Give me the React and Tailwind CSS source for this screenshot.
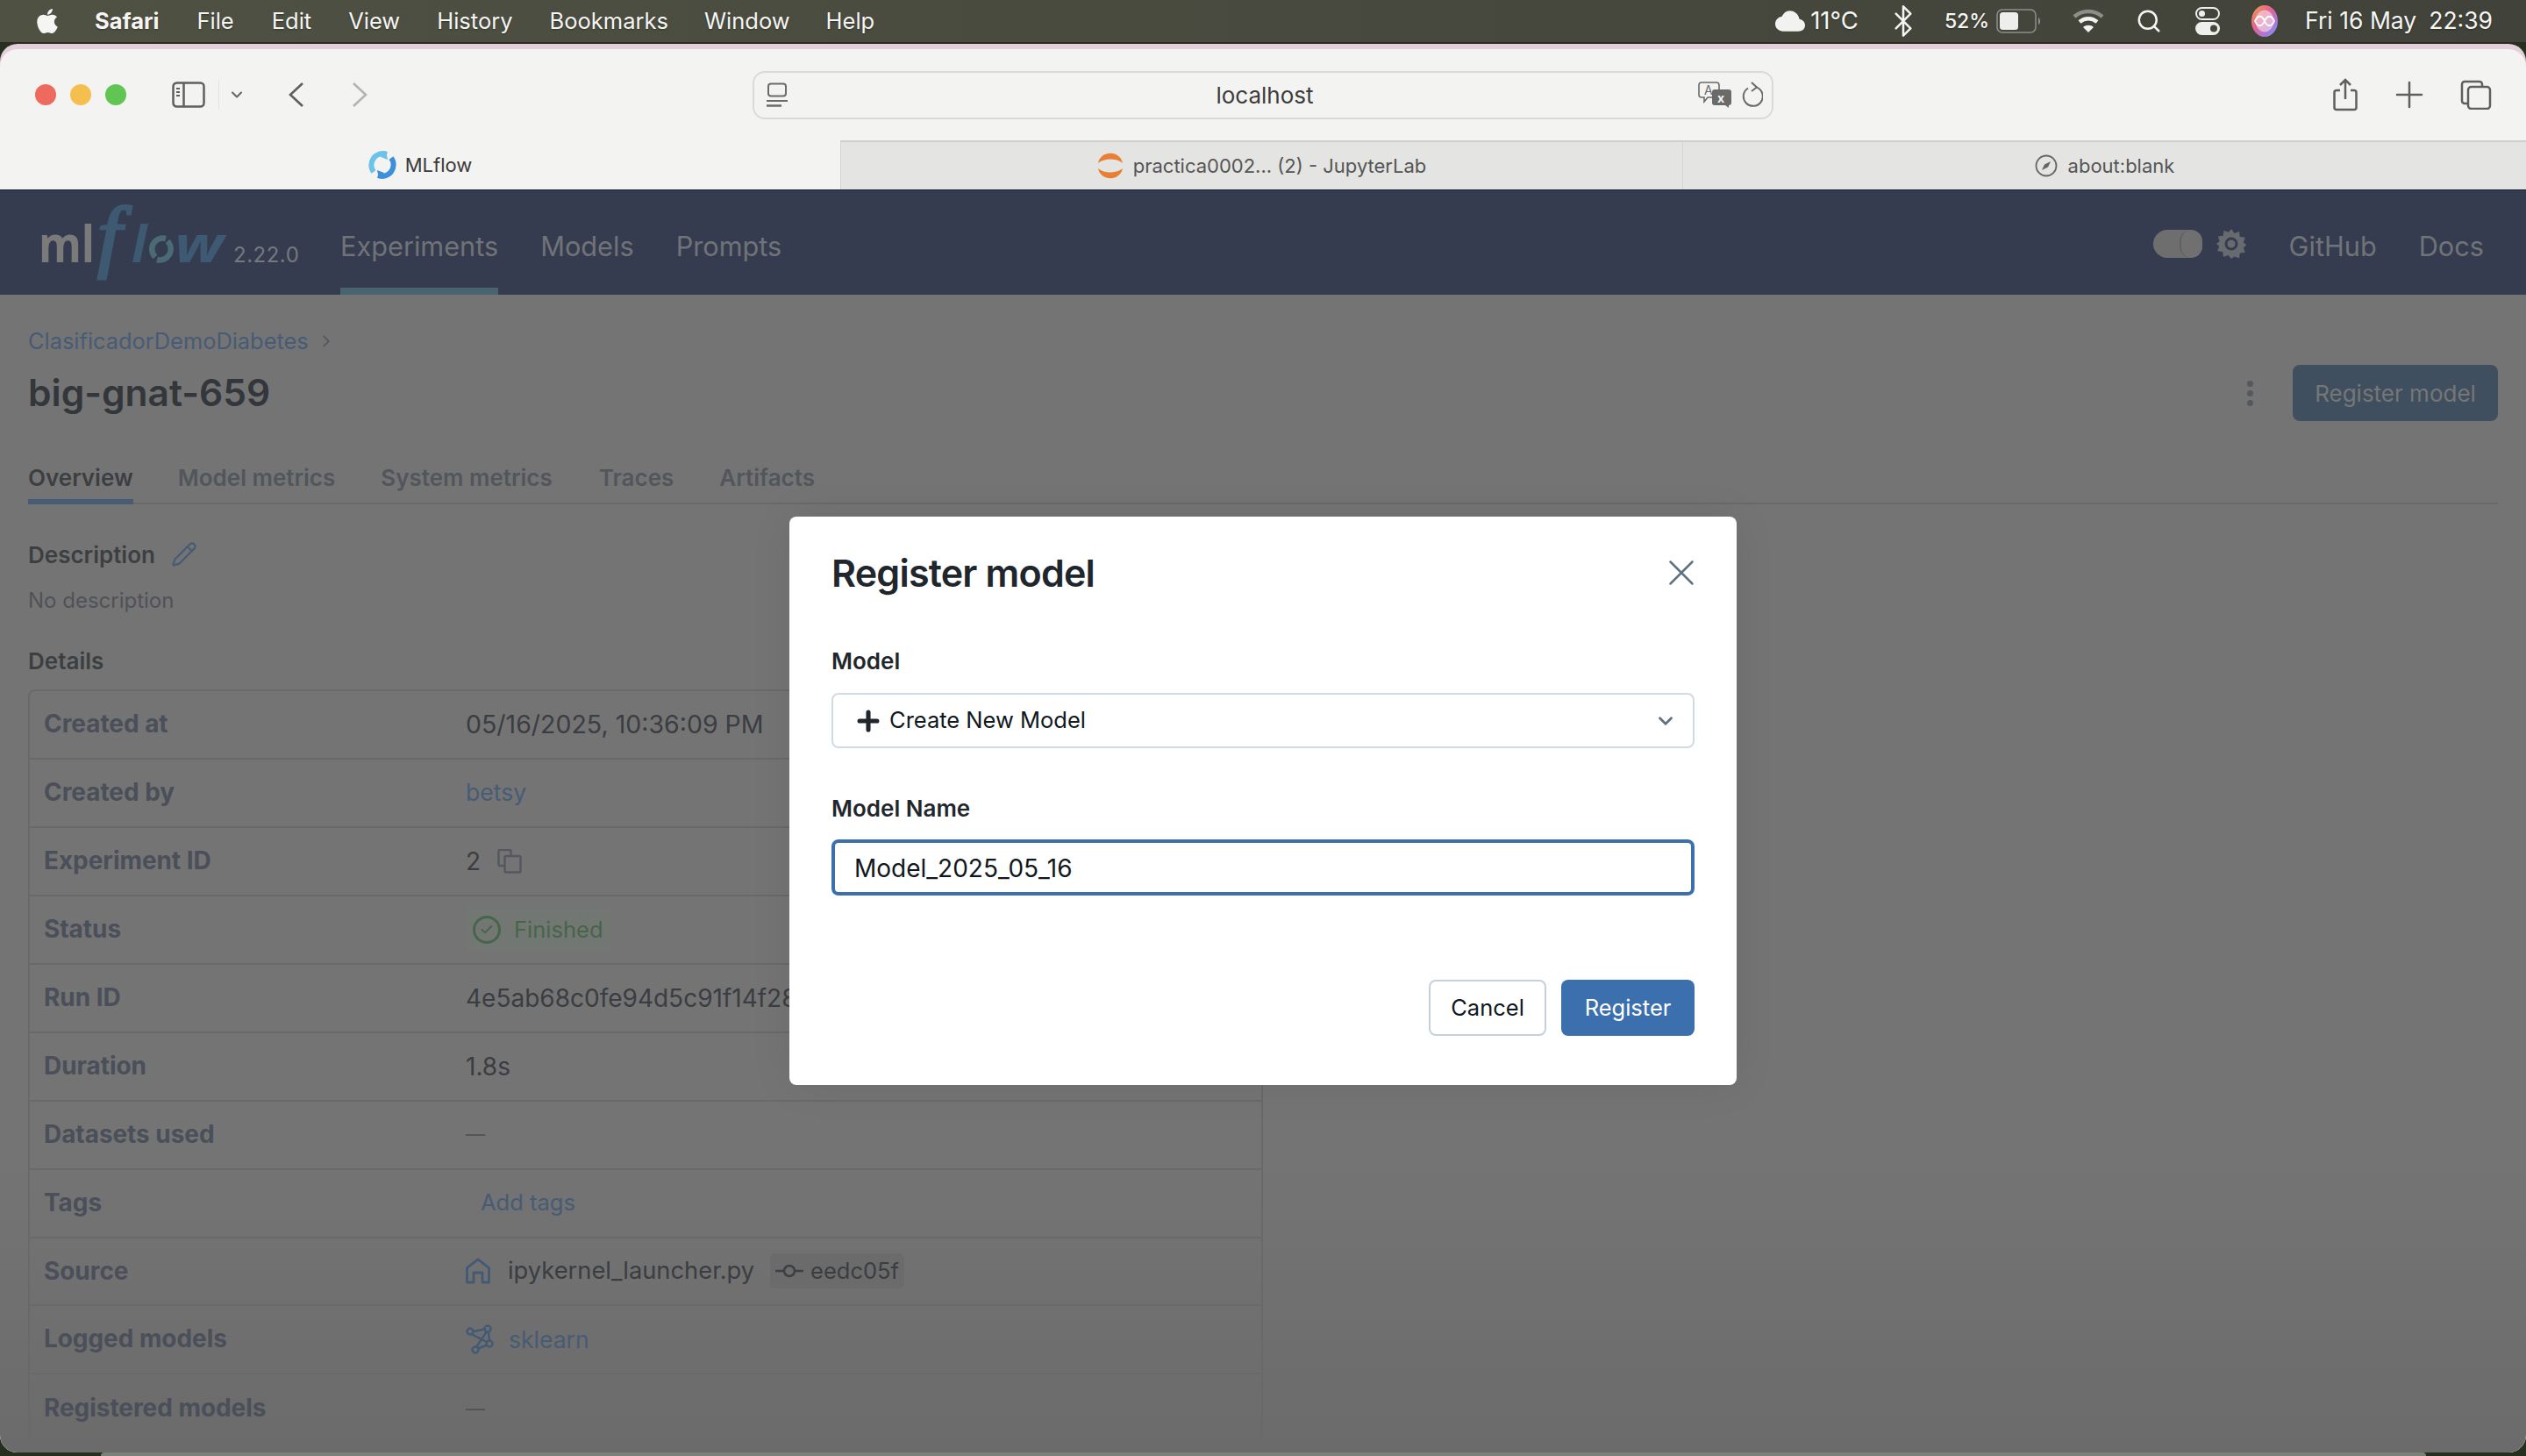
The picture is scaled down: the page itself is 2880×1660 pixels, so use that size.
import React from "react";
import { FaApple } from "react-icons/fa";
import { IoCloud } from "react-icons/io5";
import { Search, Bluetooth, X, ChevronDown, ChevronRight, Plus, Pencil, Check } from "lucide-react";

const SidebarIcon = () => (
  <svg width="38" height="30" viewBox="0 0 38 30" fill="none" stroke="#5f5f5f" strokeWidth="2.5">
    <rect x="1.5" y="1.5" width="35" height="27" rx="4" />
    <path d="M13.5 1.5v27" />
    <path d="M5 8h4M5 12h4M5 16h4" strokeWidth="2" />
  </svg>
);
const PageIcon = () => (
  <svg width="24" height="28" viewBox="0 0 24 28" fill="none" stroke="#6a6a6a" strokeWidth="2">
    <rect x="2" y="1.5" width="20" height="14" rx="3" />
    <path d="M0 21h24" />
    <path d="M0 26.500h17" strokeWidth="2.500" />
  </svg>
);
const TranslateIcon = () => (
  <svg width="38" height="30" viewBox="0 0 38 30">
    <path d="M4 1h17a3 3 0 0 1 3 3v11a3 3 0 0 1-3 3H11l-4 5v-5H4a3 3 0 0 1-3-3V4a3 3 0 0 1 3-3z" fill="#f3f3f1" stroke="#6a6a6a" strokeWidth="1.600" />
    <text x="7" y="15" fontSize="14" fontFamily="Inter, sans-serif" fill="#6a6a6a">A</text>
    <path d="M19 9h16a3 3 0 0 1 3 3v12a3 3 0 0 1-3 3v3l-4-3H19a3 3 0 0 1-3-3V12a3 3 0 0 1 3-3z" fill="#6a6a6a" />
    <text x="22" y="24" fontSize="14" fontWeight="700" fontFamily="Inter, sans-serif" fill="#f3f3f1">x</text>
  </svg>
);
const ReloadIcon = () => (
  <svg width="24" height="30" viewBox="0 0 24 30" fill="none" stroke="#6a6a6a" strokeWidth="2">
    <path d="M7 7.500a11 11 0 1 0 10-.8" />
    <path d="M11 1l6 5.500-6 4.500" />
  </svg>
);
const ShareIcon = () => (
  <svg width="28" height="38" viewBox="0 0 28 38" fill="none" stroke="#5f5f5f" strokeWidth="2.500">
    <path d="M8 14H4a2.500 2.500 0 0 0-2.500 2.500v17A2.500 2.500 0 0 0 4 36h20a2.500 2.500 0 0 0 2.500-2.500v-17A2.500 2.500 0 0 0 24 14h-4" />
    <path d="M14 24V2M8 8l6-6 6 6" />
  </svg>
);
const TabsIcon = () => (
  <svg width="36" height="34" viewBox="0 0 36 34" fill="none" stroke="#5f5f5f" strokeWidth="2.500">
    <path d="M8 27H5a3 3 0 0 1-3-3V5a3 3 0 0 1 3-3h17a3 3 0 0 1 3 3v2" />
    <rect x="9" y="8" width="25" height="25" rx="3.500" />
  </svg>
);
const MlflowFavicon = () => (
  <svg width="32" height="32" viewBox="0 0 32 32" fill="none" strokeWidth="6">
    <path d="M21 4A13 13 0 0 0 6 24" stroke="#6cc3ea" />
    <path d="M11 28A13 13 0 0 0 26 8" stroke="#3d8fdc" />
    <path d="M20 0l2 10-8-3z" fill="#6cc3ea" stroke="none" />
    <path d="M12 32l-2-10 8 3z" fill="#3d8fdc" stroke="none" />
  </svg>
);
const JupyterIcon = () => (
  <svg width="30" height="30" viewBox="0 0 30 30" fill="#e97f34">
    <path d="M1 12C4 -3 26 -3 29 12 22 6 8 6 1 12z" />
    <path d="M1 18c3 15 25 15 28 0-7 6-21 6-28 0z" />
  </svg>
);
const CompassIcon = () => (
  <svg width="26" height="26" viewBox="0 0 26 26" fill="none" stroke="#666" strokeWidth="1.800">
    <circle cx="13" cy="13" r="11.500" />
    <path d="M18 8l-7 3.500-3 6.500 7-3.500z" fill="#666" stroke="none" />
  </svg>
);
const BatteryIcon = () => (
  <svg width="52" height="28" viewBox="0 0 52 28" fill="none">
    <rect x="1" y="1" width="44" height="26" rx="6" stroke="#8f8f8a" strokeWidth="1.500" />
    <rect x="4" y="4" width="21" height="20" rx="3.500" fill="#eeeeec" />
    <path d="M48 10c2.500 1 3 7 0 8z" fill="#8f8f8a" />
  </svg>
);
const WifiIcon = () => (
  <svg width="36" height="28" viewBox="0 0 36 28" fill="none" strokeWidth="4.500">
    <path d="M2 9c9-8 23-8 32 0" stroke="#8e8e88" />
    <path d="M8 15c6-5 14-5 20 0" stroke="#f2f2f0" />
    <path d="M18 27l-6-6c3-3 9-3 12 0z" fill="#f2f2f0" />
  </svg>
);
const ControlIcon = () => (
  <svg width="28" height="32" viewBox="0 0 28 32">
    <rect x="1" y="1" width="26" height="13" rx="6.500" fill="none" stroke="#eeeeec" strokeWidth="2" />
    <circle cx="7.500" cy="7.500" r="3.500" fill="#eeeeec" />
    <rect x="0" y="17" width="28" height="15" rx="7.500" fill="#eeeeec" />
    <circle cx="21" cy="24.500" r="4" fill="#45473b" />
  </svg>
);
const SiriIcon = () => (
  <svg width="30" height="36" viewBox="0 0 30 36" fill="none">
    <defs>
      <linearGradient id="siri" x1="0" y1="0" x2="1" y2="1">
        <stop offset="0" stopColor="#f0a445" />
        <stop offset="0.4" stopColor="#e6638f" />
        <stop offset="0.75" stopColor="#a678e0" />
        <stop offset="1" stopColor="#5fb2ee" />
      </linearGradient>
    </defs>
    <ellipse cx="15" cy="18" rx="15" ry="18" fill="url(#siri)" />
    <ellipse cx="15" cy="18" rx="10.500" ry="12.500" fill="#f6e6ea" opacity="0.6" />
    <path d="M4 18c3-7 8-7 11 0s8 7 11 0c-3-7-8-7-11 0s-8 7-11 0z" stroke="#fff" strokeWidth="1.800" />
  </svg>
);
const GearIcon = () => (
  <svg width="34" height="34" viewBox="0 0 34 34">
    <path
      d="M17 0l3.500 5 5.500-2 .8 6 6 .8-2 5.500 3.700 3-3.700 3 2 5.500-6 .8-.8 6-5.500-2L17 34l-3.500-4-5.500 2-.8-6-6-.8 2-5.500L0 17l3.700-3-2-5.500 6-.8.8-6 5.500 2z"
      fill="#676a6f"
    />
    <circle cx="17" cy="17" r="7.500" fill="#363c4f" />
    <circle cx="17" cy="17" r="4.500" fill="#676a6f" />
  </svg>
);
const Logo = () => (
  <svg width="230" height="84" viewBox="0 0 230 84" className="shrink-0 overflow-visible">
    <text x="-2" y="64" fontFamily="'Open Sans', sans-serif" fontWeight="700" fontSize="58" fill="#7a7a7a" textLength="64" lengthAdjust="spacingAndGlyphs">ml</text>
    <text transform="translate(65 64) scale(1.1 1)" fontFamily="'Liberation Serif', serif" fontStyle="italic" fontSize="90" fill="#3e5a72" stroke="#3e5a72" strokeWidth="2.800">f</text>
    <text x="104" y="64" fontFamily="'Open Sans', sans-serif" fontStyle="italic" fontWeight="700" fontSize="58" fill="#3e5a72">l</text>
    <path d="M143 37a12.500 12.500 0 0 0-12 21" stroke="#4a6a78" strokeWidth="6.500" fill="none" />
    <path d="M133 61a12.500 12.500 0 0 0 12-21" stroke="#4a6a78" strokeWidth="6.500" fill="none" />
    <text x="153" y="64" fontFamily="'Open Sans', sans-serif" fontStyle="italic" fontWeight="700" fontSize="58" fill="#3e5a72" textLength="56" lengthAdjust="spacingAndGlyphs">w</text>
  </svg>
);
const CopyIcon = () => (
  <svg width="28" height="28" viewBox="0 0 28 28" fill="none" stroke="#54585e" strokeWidth="2.500">
    <path d="M8 19H3a1.500 1.500 0 0 1-1.500-1.500v-15A1.500 1.500 0 0 1 3 1h11a1.500 1.500 0 0 1 1.500 1.500V8" />
    <rect x="8.500" y="8" width="18" height="18.500" rx="1.500" />
  </svg>
);
const HomeIcon = () => (
  <svg width="28" height="30" viewBox="0 0 28 30" fill="none" stroke="#435a74" strokeWidth="2.800">
    <path d="M1.500 28V11.500L14 1.800l12.500 9.700V28H19V17H9v11z" strokeLinejoin="round" />
  </svg>
);
const CommitIcon = () => (
  <svg width="32" height="18" viewBox="0 0 32 18" fill="none" stroke="#3c3f43" strokeWidth="2.500">
    <circle cx="16" cy="9" r="6" />
    <path d="M0 9h10M22 9h10" />
  </svg>
);
const ModelIcon = () => (
  <svg width="32" height="34" viewBox="0 0 32 34" fill="none" stroke="#435a74" strokeWidth="2.500">
    <circle cx="5" cy="8" r="3.500" />
    <circle cx="25" cy="5" r="3.500" />
    <circle cx="27" cy="22" r="3.500" />
    <circle cx="11" cy="29" r="3.500" />
    <path d="M8.500 8L21.500 5.500M6.500 11L24 20M24 8L12 26M26 8.500L27 18.500M14 27.500l10-4" />
  </svg>
);

const MenuItem = ({ children, className }) => <span className={className}>{children}</span>;

const MenuBar = () => (
  <div className="flex h-12 shrink-0 items-center bg-linear-to-r from-[#4f5143] to-[#41433a] text-[25.500px] text-[#f5f5f3] [text-shadow:0_1px_2px_rgba(0,0,0,0.35)]">
    <FaApple className="ml-[38px] text-[32px]" />
    <MenuItem className="ml-[38px] font-bold">Safari</MenuItem>
    <MenuItem className="ml-[43px]">File</MenuItem>
    <MenuItem className="ml-[43px]">Edit</MenuItem>
    <MenuItem className="ml-[42px]">View</MenuItem>
    <MenuItem className="ml-[42px]">History</MenuItem>
    <MenuItem className="ml-[42px]">Bookmarks</MenuItem>
    <MenuItem className="ml-[41px]">Window</MenuItem>
    <MenuItem className="ml-[41px]">Help</MenuItem>
    <div className="ml-auto flex items-center">
      <IoCloud className="text-[34px] text-[#f2f2f0]" />
      <span className="ml-[6px] text-[27.500px]">11°C</span>
      <Bluetooth className="ml-[31px] h-[40px] w-[40px]" strokeWidth={1.500} />
      <span className="ml-[27px] text-[23px] font-medium">52%</span>
      <span className="ml-[8px] flex"><BatteryIcon /></span>
      <span className="ml-[35px] flex"><WifiIcon /></span>
      <Search className="ml-[36px] h-[30px] w-[30px]" strokeWidth={2} />
      <span className="ml-[38px] flex"><ControlIcon /></span>
      <span className="ml-[36px] flex"><SiriIcon /></span>
      <span className="ml-[31px] text-[26.500px]">Fri 16 May</span>
      <span className="ml-[14px] mr-[38px] text-[26.500px]">22:39</span>
    </div>
  </div>
);

const Toolbar = () => (
  <div className="flex h-[104px] shrink-0 items-center pl-[40px]">
    <div className="flex gap-4">
      <span className="h-6 w-6 rounded-full bg-[#ee6a5f]" />
      <span className="h-6 w-6 rounded-full bg-[#f5bf4f]" />
      <span className="h-6 w-6 rounded-full bg-[#61c554]" />
    </div>
    <span className="ml-[52px] flex"><SidebarIcon /></span>
    <span className="ml-[15px] h-[34px] w-px bg-[#e2e2e0]" />
    <ChevronDown className="ml-[10px] h-5 w-5 text-[#666]" strokeWidth={2.500} />
    <svg className="ml-[48px]" width="20" height="30" viewBox="0 0 20 30" fill="none" stroke="#5f5f5f" strokeWidth="2.600"><path d="M17 2L3 15l14 13" /></svg>
    <svg className="ml-[52px]" width="20" height="30" viewBox="0 0 20 30" fill="none" stroke="#b3b3b1" strokeWidth="2.600"><path d="M3 2l14 13L3 28" /></svg>
    <div className="ml-[438px] flex h-[55px] w-[1164px] items-center rounded-[14px] border-2 border-[#dadad8] pl-[14px] pr-[10px]">
      <PageIcon />
      <span className="flex-1 pl-[50px] text-center text-[26px] text-[#3c3c3c]">localhost</span>
      <TranslateIcon />
      <span className="ml-[12px] flex"><ReloadIcon /></span>
    </div>
    <span className="ml-[638px] flex"><ShareIcon /></span>
    <Plus className="ml-[35px] h-12 w-12 text-[#5f5f5f]" strokeWidth={1.250} />
    <span className="ml-[34px] flex"><TabsIcon /></span>
  </div>
);

const TabBar = () => (
  <div className="flex h-[56px] shrink-0 text-[22px]">
    <div className="flex w-[958px] items-center justify-center gap-[10px] text-[#3a3a3a]">
      <MlflowFavicon />
      <span>MLflow</span>
    </div>
    <div className="flex w-[961px] items-center justify-center gap-[11px] border-x border-t-2 border-x-[#d4d4d2] border-t-[#cfcfcd] bg-[#e4e4e2] text-[#555]">
      <JupyterIcon />
      <span>practica0002... (2) - JupyterLab</span>
    </div>
    <div className="flex w-[961px] items-center justify-center gap-[12px] border-t-2 border-[#cfcfcd] bg-[#e4e4e2] text-[#555]">
      <CompassIcon />
      <span>about:blank</span>
    </div>
  </div>
);

const Nav = () => (
  <div className="flex h-[120px] shrink-0 items-center border-t border-[#141c33] bg-[#363c4f] text-[30.700px] text-[#707377]">
    <div className="ml-[46px] flex w-[342px] items-center">
      <Logo />
      <span className="-ml-[10px] mt-[28px] text-[24px] tracking-[0.5px] text-[#76797c]">2.22.0</span>
    </div>
    <div className="relative flex h-full items-center pt-[10px]">
      <span>Experiments</span>
      <span className="absolute bottom-0 left-0 right-0 h-2 bg-[#4a6370]" />
    </div>
    <span className="ml-[48px] mt-[10px]">Models</span>
    <span className="ml-[48px] mt-[10px]">Prompts</span>
    <div className="ml-auto flex items-center pr-[48px]">
      <span className="mt-[3px] flex h-8 w-[56px] items-center justify-end rounded-full bg-[#6e6e6e]">
        <span className="h-8 w-[26px] rounded-full border-l-2 border-[#5f6061] bg-[#707070]" />
      </span>
      <span className="ml-[16px] mt-[3px] flex"><GearIcon /></span>
      <span className="ml-[49px] mt-[10px]">GitHub</span>
      <span className="ml-[48px] mt-[10px]">Docs</span>
    </div>
  </div>
);

const Row = ({ label, children, last }) => (
  <div className={`flex h-[77.950px] items-center text-[28px] ${last ? "" : "border-b-2 border-[#696969]"}`}>
    <span className="w-[497px] pl-[16px] text-[27.900px] font-bold text-[#4a4f59]">{label}</span>
    <div className="flex items-center text-[#3a3d41]">{children}</div>
  </div>
);

const Details = () => (
  <div className="mt-[15px] h-[855px] w-[1408px] overflow-hidden rounded-t-lg border-x-2 border-t-2 border-[#696969]">
    <Row label="Created at"><span className="text-[28.500px]">05/16/2025, 10:36:09 PM</span></Row>
    <Row label="Created by"><span className="text-[26.600px] text-[#475b75]">betsy</span></Row>
    <Row label="Experiment ID">
      <span>2</span>
      <span className="ml-[19px] flex"><CopyIcon /></span>
    </Row>
    <Row label="Status">
      <span className="flex h-[50px] items-center rounded bg-[#737773] px-[8px] text-[#466549]">
        <span className="flex h-[32px] w-[32px] items-center justify-center rounded-full border-[3px] border-[#466549]">
          <Check className="h-[16px] w-[16px]" strokeWidth={3} />
        </span>
        <span className="ml-[15px] text-[25.500px]">Finished</span>
      </span>
    </Row>
    <Row label="Run ID"><span className="whitespace-nowrap">4e5ab68c0fe94d5c91f14f28</span></Row>
    <Row label="Duration">1.8s</Row>
    <Row label="Datasets used"><span className="text-[22px] text-[#4f5257]">—</span></Row>
    <Row label="Tags"><span className="ml-[17px] text-[25.500px] text-[#475b75]">Add tags</span></Row>
    <Row label="Source">
      <HomeIcon />
      <span className="ml-[20px] text-[27.300px]">ipykernel_launcher.py</span>
      <span className="ml-[18px] flex h-[40px] items-center gap-[8px] rounded-md bg-[#6b6b6b] px-[6px] text-[25.500px]">
        <CommitIcon />
        eedc05f
      </span>
    </Row>
    <Row label="Logged models">
      <ModelIcon />
      <span className="ml-[17px] text-[26.500px] text-[#475b75]">sklearn</span>
    </Row>
    <Row label="Registered models" last><span className="text-[22px] text-[#4f5257]">—</span></Row>
  </div>
);

const Page = () => (
  <div className="flex min-h-0 flex-1 flex-col overflow-hidden bg-linear-to-b from-[#747474] from-75% to-[#6b6b6b] px-8">
    <div className="mt-9 flex h-[34px] items-center text-[25.400px] text-[#475b75]">
      ClasificadorDemoDiabetes
      <ChevronRight className="ml-[9px] h-[22px] w-[22px] text-[#55595f]" strokeWidth={2} />
    </div>
    <div className="mt-[10px] flex h-16 items-center">
      <h1 className="text-[42.500px] font-semibold text-[#33363a]">big-gnat-659</h1>
      <div className="ml-auto flex flex-col gap-[4px]">
        <span className="h-[7px] w-[7px] rounded-full bg-[#55585c]" />
        <span className="h-[7px] w-[7px] rounded-full bg-[#55585c]" />
        <span className="h-[7px] w-[7px] rounded-full bg-[#55585c]" />
      </div>
      <div className="ml-[45px] flex h-16 w-[234px] items-center justify-center rounded-lg bg-[#3f4f60] text-[26px] text-[#767676]">
        Register model
      </div>
    </div>
    <div className="mt-[35px] flex h-[60px] shrink-0 items-center border-b-2 border-[#696969] text-[26px] font-semibold text-[#52565c]">
      <div className="relative flex h-full items-center text-[#3c3f42]">
        Overview
        <span className="absolute -bottom-[2px] left-0 right-0 h-[6px] bg-[#475b75]" />
      </div>
      <span className="ml-[51px]">Model metrics</span>
      <span className="ml-[52px]">System metrics</span>
      <span className="ml-[53px]">Traces</span>
      <span className="ml-[52px]">Artifacts</span>
    </div>
    <div className="mt-[39px] flex h-9 shrink-0 items-center text-[26px] font-semibold text-[#3c3f42]">
      Description
      <Pencil className="ml-[18px] h-[30px] w-[30px] text-[#475b75]" strokeWidth={1.800} />
    </div>
    <div className="mt-[18px] flex h-[34px] shrink-0 items-center text-[24px] text-[#4f5257]">No description</div>
    <div className="mt-[33px] flex h-9 shrink-0 items-center text-[26px] font-semibold text-[#3c3f42]">Details</div>
    <Details />
  </div>
);

const Modal = () => (
  <div className="absolute left-[900px] top-[589px] h-[648px] w-[1080px] rounded-lg bg-white pl-[48px] pr-[48px] pt-[36px] text-[#11171c] shadow-[0_0_50px_rgba(0,0,0,0.07)]">
    <div className="flex h-14 items-center justify-between">
      <h2 className="text-[43px] font-semibold tracking-[-0.8px] text-[#1f272d]">Register model</h2>
      <X className="-mr-[10px] h-[50px] w-[50px] text-[#5f7281]" strokeWidth={1.200} />
    </div>
    <div className="mt-[55px] flex h-[34px] items-center text-[26px] font-semibold text-[#1f272d]">Model</div>
    <div className="mt-[20px] flex h-[63px] items-center rounded-lg border-2 border-[#d1d9e1] pl-[23px] pr-[18px] text-[25.500px]">
      <Plus className="h-[34px] w-[34px] text-[#1f272d]" strokeWidth={3.600} />
      <span className="ml-[7px]">Create New Model</span>
      <ChevronDown className="ml-auto h-[26px] w-[26px] text-[#5f7281]" strokeWidth={2.600} />
    </div>
    <div className="mt-[51px] flex h-[34px] items-center text-[26px] font-semibold text-[#1f272d]">Model Name</div>
    <div className="mt-[19px] flex h-16 items-center rounded-lg border-4 border-[#3b6fae] pl-[22px] pt-[2px] text-[28px]">Model_2025_05_16</div>
    <div className="mt-[96px] flex justify-end gap-[17px]">
      <div className="flex h-16 w-[134px] items-center justify-center rounded-lg border-2 border-[#c6d0da] text-[25.500px]">Cancel</div>
      <div className="flex h-16 w-[152px] items-center justify-center rounded-lg bg-[#3b6fae] text-[25.500px] text-white">Register</div>
    </div>
  </div>
);

export default function App() {
  return (
    <div className="relative flex h-[1660px] w-[2880px] flex-col overflow-hidden bg-[#26301f] font-['Inter','Liberation_Sans',sans-serif]">
      <MenuBar />
      <div className="h-[2px] shrink-0 bg-[#2c2a22]" />
      <div className="flex min-h-0 flex-1 flex-col overflow-hidden rounded-b-[20px] rounded-t-[20px] bg-[#e3cfd9] pt-[6px]">
        <div className="flex min-h-0 flex-1 flex-col overflow-hidden rounded-t-[20px] bg-[#f3f3f1]">
          <Toolbar />
          <TabBar />
          <Nav />
          <Page />
        </div>
      </div>
      <div className="mx-auto h-1 w-[2651px] shrink-0 rounded-t-lg bg-[#7d8278]" />
      <Modal />
    </div>
  );
}
